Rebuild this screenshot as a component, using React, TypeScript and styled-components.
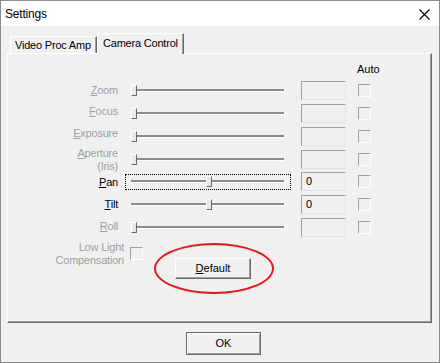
import styled, { createGlobalStyle } from "styled-components";

const GlobalStyle = createGlobalStyle`
  body {
    margin: 0;
    font-family: "Liberation Sans", Arial, sans-serif;
    background: #ffffff;
  }
`;

const controls = [
  { label: "Zoom", key: "Z", rest: "oom", enabled: false, shift: 0 },
  { label: "Focus", key: "F", rest: "ocus", enabled: false, shift: -2 },
  { label: "Exposure", key: "E", rest: "xposure", enabled: false, shift: -3 },
  { label: "Aperture", key: "A", rest: "perture", sub: "(Iris)", enabled: false, shift: 0, tight: true },
  { label: "Pan", key: "P", rest: "an", enabled: true, value: 50, text: "0", focus: true, shift: 1 },
  { label: "Tilt", key: "T", rest: "ilt", enabled: true, value: 50, text: "0", shift: 0 },
  { label: "Roll", key: "R", rest: "oll", enabled: false, shift: -1 },
];

function App() {
  return (
    <>
      <GlobalStyle />
      <Window>
        <TitleBar>
          <Title>Settings</Title>
          <CloseIcon width="11" height="11" viewBox="0 0 11 11">
            <path d="M0.5 0.5 L10.5 10.5 M10.5 0.5 L0.5 10.5" stroke="#000" strokeWidth="1.1" />
          </CloseIcon>
        </TitleBar>
        <Body>
          <TabStrip>
            <Tab>Video Proc Amp</Tab>
            <Tab selected>Camera Control</Tab>
          </TabStrip>
          <Panel>
            <HeaderRow>Auto</HeaderRow>
            {controls.map((c) => (
              <Row key={c.label} tight={!!c.tight}>
                <Label enabled={c.enabled} shift={c.shift}>
                  <u>{c.key}</u>
                  {c.rest}
                  {c.sub && <br />}
                  {c.sub}
                </Label>
                <SliderArea focus={!!c.focus}>
                  <Track />
                  <Thumb
                    style={{ left: 5 + Math.round(((c.value || 0) / 100) * 149) }}
                  />
                </SliderArea>
                <EditBox>{c.text || ""}</EditBox>
                <CheckBox />
              </Row>
            ))}
            <BottomRow>
              <Label enabled={false} width={116} shift={0}>
                Low Light
                <br />
                Compensation
              </Label>
              <LowCheck />
              <Button>
                <u>D</u>efault
              </Button>
              <Highlight />
            </BottomRow>
          </Panel>
          <Footer>
            <OkButton>OK</OkButton>
          </Footer>
        </Body>
      </Window>
    </>
  );
}

const Window = styled.div`
  width: 440px;
  height: 363px;
  box-sizing: border-box;
  border: 1px solid #8c8c8c;
  display: flex;
  flex-direction: column;
  background: #f0f0f0;
`;

const TitleBar = styled.div`
  height: 25px;
  background: #ffffff;
  display: flex;
  align-items: center;
  justify-content: space-between;
  padding: 0 9px 0 4px;
  flex-shrink: 0;
`;

const Title = styled.div`
  font-size: 12px;
  color: #000;
  letter-spacing: -0.2px;
  margin-top: 1px;
`;

const CloseIcon = styled.svg`
  display: block;
  margin-top: 1px;
`;

const Body = styled.div`
  flex: 1;
  padding: 7px 0 0 6px;
  display: flex;
  flex-direction: column;
`;

const TabStrip = styled.div`
  height: 20px;
  display: flex;
  align-items: flex-end;
  padding-left: 3px;
`;

const Tab = styled.div<{ selected?: boolean }>`
  box-sizing: border-box;
  width: 87px;
  height: ${(p) => (p.selected ? "21px" : "17px")};
  margin-bottom: ${(p) => (p.selected ? "-1px" : "0")};
  position: relative;
  z-index: ${(p) => (p.selected ? 2 : 0)};
  background: #f0f0f0;
  border-top: 1px solid #ffffff;
  border-left: 1px solid #ffffff;
  border-right: 1px solid #696969;
  box-shadow: inset -1px 0 0 #a0a0a0;
  font-size: 11px;
  letter-spacing: -0.2px;
  color: #000;
  padding: ${(p) => (p.selected ? "3px 0 0 5px" : "2px 0 0 4px")};
  white-space: nowrap;
`;

const Panel = styled.div`
  box-sizing: border-box;
  width: 425px;
  height: 270px;
  border-top: 1px solid #ffffff;
  border-left: 1px solid #ffffff;
  border-right: 1px solid #696969;
  border-bottom: 1px solid #696969;
  box-shadow: inset -1px -1px 0 #a0a0a0;
  background: #f0f0f0;
  position: relative;
  z-index: 1;
`;

const HeaderRow = styled.div`
  margin-top: 9px;
  margin-bottom: 5px;
  padding-left: 349px;
  font-size: 11px;
  line-height: 13px;
  color: #000;
`;

const Row = styled.div<{ tight: boolean }>`
  height: 19px;
  display: flex;
  align-items: center;
  margin-bottom: ${(p) => (p.tight ? "3px" : "4px")};
`;

const Label = styled.div<{ enabled: boolean; width?: number; shift: number }>`
  width: ${(p) => p.width || 110}px;
  flex-shrink: 0;
  text-align: right;
  font-size: 11px;
  line-height: 13px;
  letter-spacing: -0.2px;
  transform: translateY(${(p) => p.shift}px);
  color: ${(p) => (p.enabled ? "#000000" : "#a0a0a0")};
`;

const SliderArea = styled.div<{ focus: boolean }>`
  box-sizing: border-box;
  width: 166px;
  height: 16px;
  margin-left: 7px;
  padding: 0 6px 0 5px;
  display: flex;
  align-items: center;
  position: relative;
  border: 1px dotted ${(p) => (p.focus ? "#000000" : "transparent")};
`;

const Track = styled.div`
  flex: 1;
  height: 2px;
  margin-top: -1px;
  background: #8c8c8c;
  box-shadow: 0 1px 0 #ffffff, 1px 0 0 #ffffff;
`;

const Thumb = styled.div`
  position: absolute;
  top: 1px;
  box-sizing: border-box;
  width: 6px;
  height: 11px;
  background: #e8e8e8;
  border-top: 1px solid #ffffff;
  border-left: 1px solid #ffffff;
  border-right: 1px solid #696969;
  border-bottom: 1px solid #696969;
`;

const EditBox = styled.div`
  box-sizing: border-box;
  width: 45px;
  height: 19px;
  margin-left: 10px;
  border-top: 1px solid #a0a0a0;
  border-left: 1px solid #a0a0a0;
  border-right: 1px solid #e3e3e3;
  border-bottom: 1px solid #e3e3e3;
  background: #f0f0f0;
  font-size: 11px;
  line-height: 17px;
  padding-left: 4px;
  color: #000;
`;

const CheckBox = styled.div`
  box-sizing: border-box;
  width: 13px;
  height: 13px;
  margin-left: 12px;
  border-top: 1px solid #a0a0a0;
  border-left: 1px solid #a0a0a0;
  border-right: 1px solid #ffffff;
  border-bottom: 1px solid #ffffff;
  background: #f0f0f0;
`;

const BottomRow = styled.div`
  position: relative;
  display: flex;
  align-items: flex-start;
`;

const LowCheck = styled(CheckBox)`
  margin-left: 6px;
  margin-top: 6px;
`;

const Button = styled.div`
  box-sizing: border-box;
  width: 76px;
  height: 21px;
  margin-left: 32px;
  margin-top: 17px;
  background: #f0f0f0;
  border-top: 1px solid #ffffff;
  border-left: 1px solid #ffffff;
  border-right: 1px solid #696969;
  border-bottom: 1px solid #696969;
  box-shadow: inset -1px -1px 0 #a0a0a0;
  font-size: 11px;
  line-height: 18px;
  text-align: center;
  color: #000;
`;

const Highlight = styled.div`
  position: absolute;
  left: 146px;
  top: 2px;
  width: 120px;
  height: 51px;
  box-sizing: border-box;
  border: 2px solid #e8161b;
  border-radius: 50%;
  pointer-events: none;
`;

const Footer = styled.div`
  padding: 9px 0 0 179px;
`;

const OkButton = styled.div`
  box-sizing: border-box;
  width: 75px;
  height: 23px;
  border: 1px solid #696969;
  box-shadow: inset 1px 1px 0 #ffffff, inset -1px -1px 0 #a0a0a0;
  background: #f0f0f0;
  font-size: 11px;
  line-height: 21px;
  text-align: center;
  color: #000;
`;

export default App;
